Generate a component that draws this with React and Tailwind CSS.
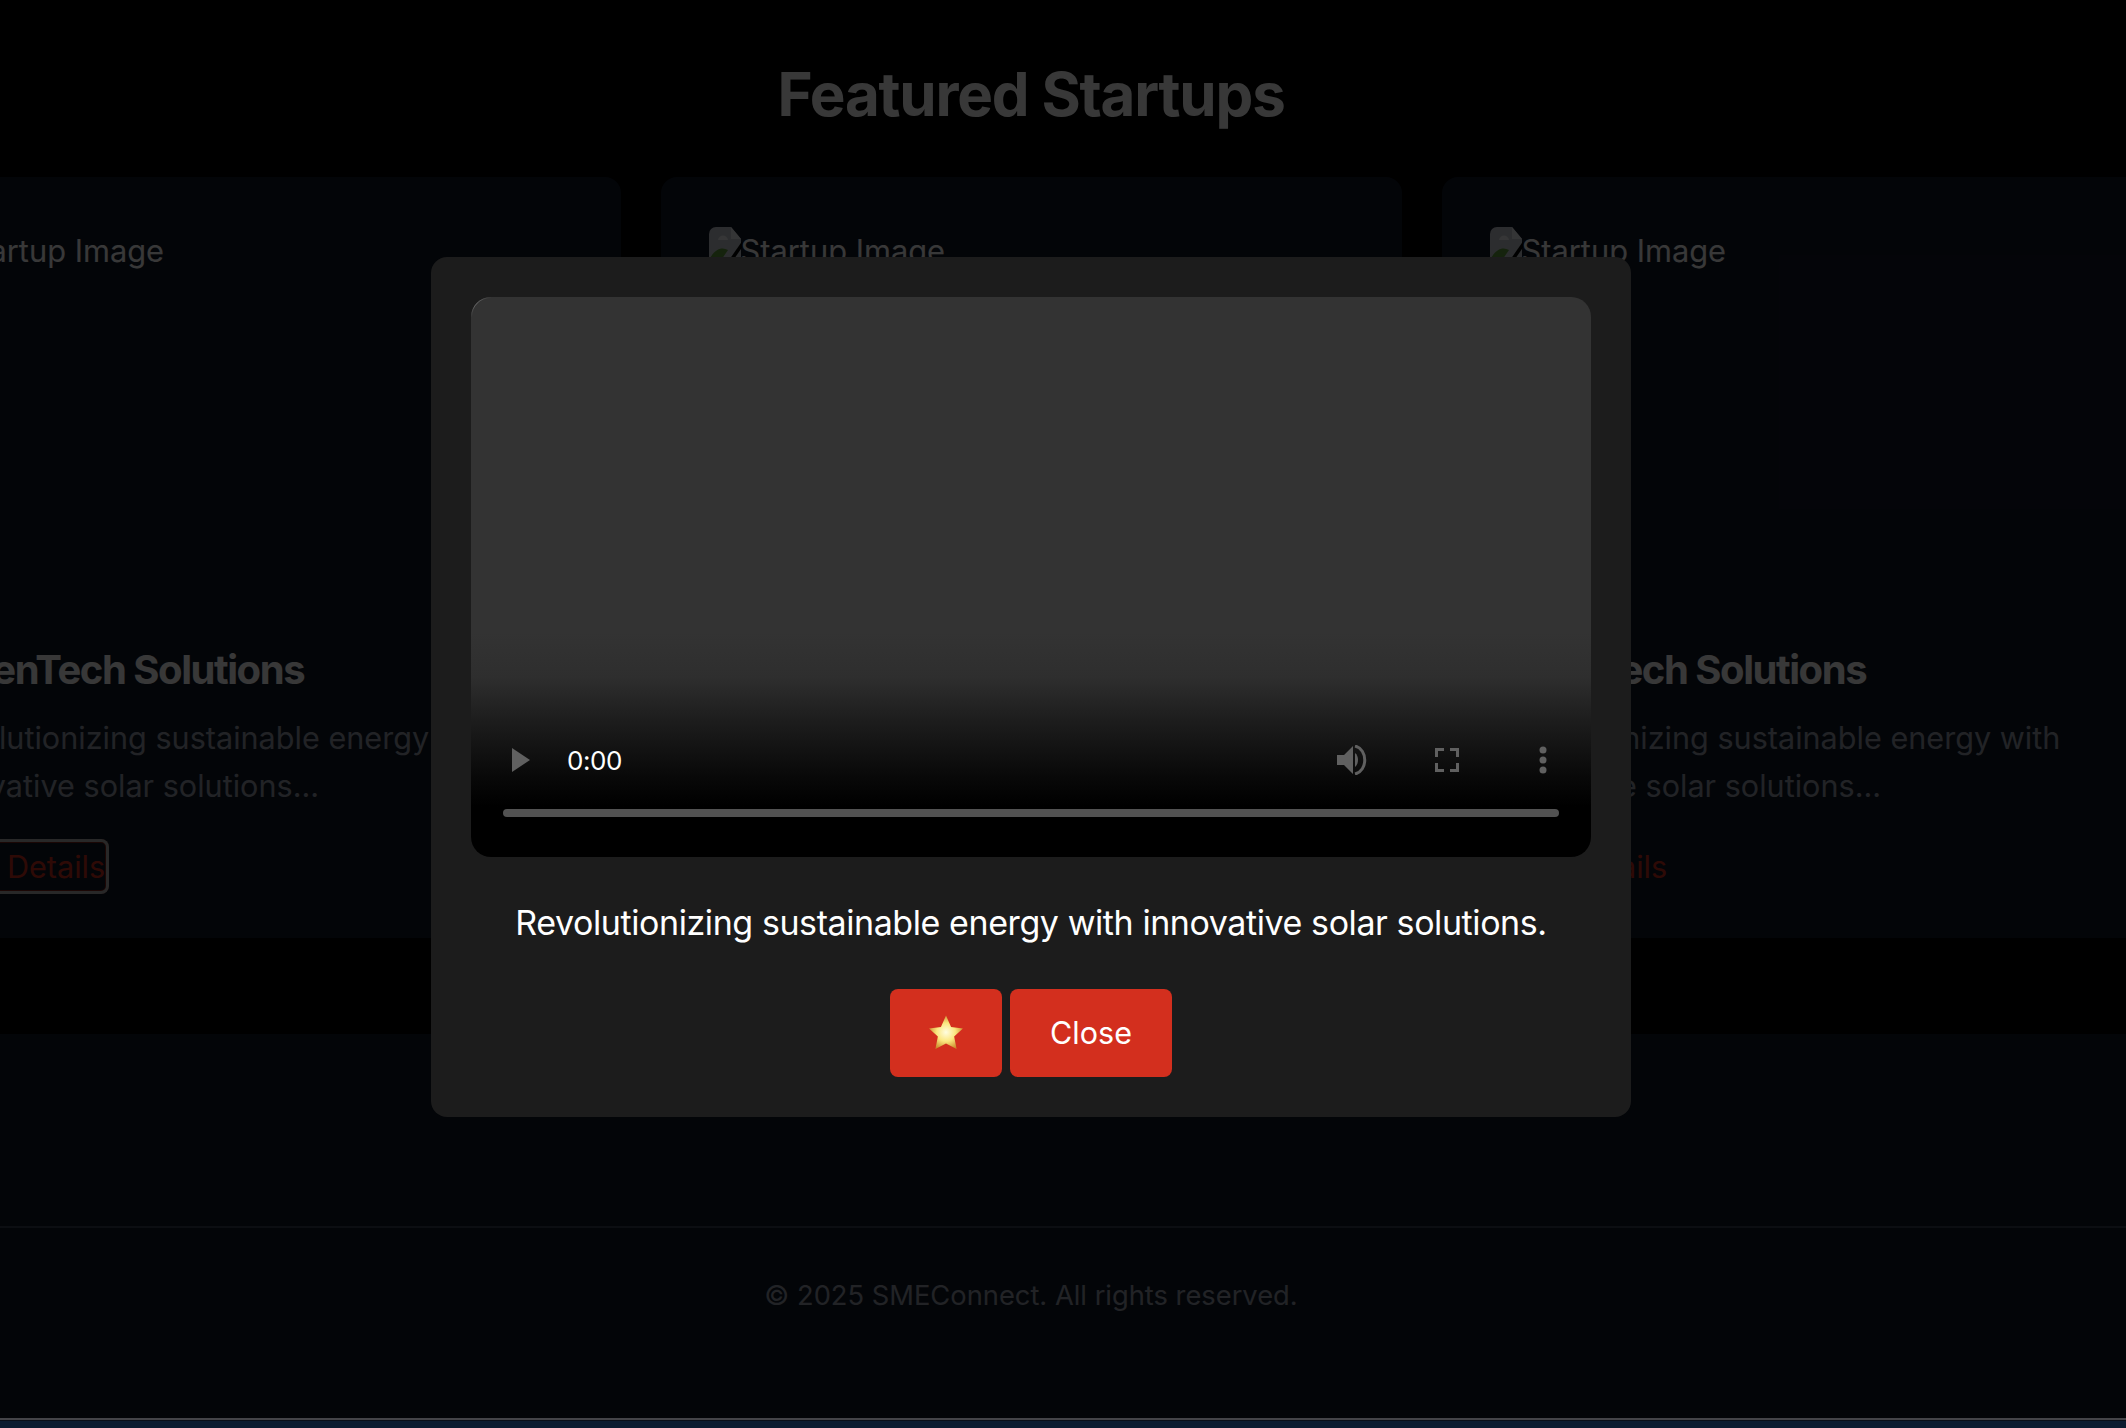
const BrokenImage = () => (
  <svg width="34" height="42" viewBox="0 0 34 42" className="shrink-0 mt-[2px] -mr-[2px]">
    <path d="M7 0h15l10 12v23a7 7 0 0 1-7 7H7a7 7 0 0 1-7-7V7a7 7 0 0 1 7-7z" fill="#c8cdd4" />
    <path d="M22 0l10 12H22z" fill="#eef0f3" />
    <path d="M9 13c1-6 9-6 10 0z" fill="#f4f6f8" />
    <path d="M0 33c5-10 12-14 19-10L6 42a7 7 0 0 1-6-7z" fill="#5f9e3c" />
    <path d="M16 42L34 16" stroke="#000" strokeWidth="3.500" />
  </svg>
);

const StartupCard = ({ focused }) => (
  <div className="w-[741px] h-[761px] shrink-0 rounded-2xl bg-gray-900 p-12">
    <div className="h-[397px] mb-6 flex items-start text-[30.8px] leading-[52px] text-white">
      <BrokenImage />
      <span>Startup Image</span>
    </div>
    <h3 className="text-[40px] leading-[48px] font-bold tracking-[-1.45px] text-white mb-5">GreenTech Solutions</h3>
    <p className="text-[30.6px] leading-[48px] text-gray-400">
      Revolutionizing sustainable energy with innovative solar solutions...
    </p>
    {focused ? (
      <button className="mt-[29px] -ml-1 px-1 h-[55px] rounded-lg text-[30.6px] text-[#d32f1e] ring-[3px] ring-inset ring-[#b8b8b8] shadow-[inset_0_0_0_4px_#7a2218]">View Details</button>
    ) : (
      <button className="mt-[29px] h-[55px] text-[30.6px] text-[#d32f1e]">View Details</button>
    )}
  </div>
);

const VideoPlayer = () => (
  <div className="relative w-[1120px] h-[560px] rounded-[20px] bg-[linear-gradient(to_bottom,#333333_60%,#2e2e2e_68%,#1c1c1c_76%,#080808_86%,#000000_91%)] flex flex-col justify-end px-8 pb-[40px]">
    <svg width="22" height="22" viewBox="0 0 22 22" fill="none" className="absolute left-0 top-0">
      <path d="M0.500 20C0.500 9 9 0.500 20 0.500" stroke="url(#arc)" strokeWidth="1" />
      <defs>
        <linearGradient id="arc" x1="0" y1="20" x2="20" y2="0" gradientUnits="userSpaceOnUse">
          <stop offset="0%" stopColor="#333333" />
          <stop offset="45%" stopColor="#6a6a6a" />
          <stop offset="100%" stopColor="#333333" />
        </linearGradient>
      </defs>
    </svg>
    <div className="flex items-center justify-between h-[40px] mb-[29px]">
      <div className="flex items-center gap-[37px] pl-[9px]">
        <svg width="18" height="24" viewBox="0 0 18 24"><path d="M0 0l18 12L0 24z" fill="#606060" /></svg>
        <span className="text-[26px] tracking-[-0.4px] text-white">0:00</span>
      </div>
      <div className="flex items-center pr-[12px]">
        <svg width="32" height="30" viewBox="0 0 32 30">
          <path d="M1 10h7l9-9v28l-9-9H1z" fill="#606060" />
          <path d="M19 8c4 3 4 11 0 14z" fill="#606060" />
          <path d="M19 1c13 3 13 25 0 28" fill="none" stroke="#606060" strokeWidth="3" />
        </svg>
        <svg width="24" height="24" viewBox="0 0 24 24" fill="none" stroke="#606060" strokeWidth="3" className="ml-[67px] mr-[80px]">
          <path d="M1.500 9V1.500H9M15 1.500h7.500V9M22.500 15v7.500H15M9 22.500H1.500V15" />
        </svg>
        <svg width="8" height="28" viewBox="0 0 8 28" fill="#606060">
          <circle cx="4" cy="4" r="3.500" />
          <circle cx="4" cy="14" r="3.500" />
          <circle cx="4" cy="24" r="3.500" />
        </svg>
      </div>
    </div>
    <div className="h-2 rounded-full bg-[#525252]" />
  </div>
);

const StarEmoji = () => (
  <svg width="36" height="35" viewBox="0 0 34 33" className="-mt-[2px]">
    <defs>
      <radialGradient id="star" cx="50%" cy="50%" r="55%">
        <stop offset="0%" stopColor="#fffde0" />
        <stop offset="50%" stopColor="#fbe77f" />
        <stop offset="100%" stopColor="#c98526" />
      </radialGradient>
    </defs>
    <path d="M17 0.500l4.800 10.900 11.200 1.300-8.300 7.600 2.300 11.700L17 26.900 7 32l2.300-11.700L1 12.700l11.200-1.300z" fill="url(#star)" />
  </svg>
);

export default function App() {
  return (
    <div className="relative w-[2126px] h-[1428px] overflow-hidden bg-black font-['Inter',sans-serif]">
      <div className="w-[2062px]">
        <h2 className="pt-[58px] mb-[47px] text-center text-[60px] leading-[72px] font-bold tracking-[-1.2px] text-white">Featured Startups</h2>
        <div className="flex justify-center gap-10 pb-[96px]">
          <StartupCard focused />
          <StartupCard />
          <StartupCard />
        </div>
      </div>

      <footer className="w-full h-[384px] bg-gray-900 pt-[192px]">
        <div className="border-t-2 border-gray-700 w-full h-[70px]" />
        <p className="w-[2062px] text-center text-[27.3px] leading-[36px] -mt-[18px] text-gray-400">© 2025 SMEConnect. All rights reserved.</p>
      </footer>

      <div className="h-[10px] flex flex-col bg-[#0c1c30]">
        <div className="h-[2px] bg-[#444448]" />
        <div className="h-px bg-[#0a0f18]" />
      </div>

      <div className="absolute left-0 right-0 top-0 h-[1418px] bg-black/[0.78]">
        <div className="w-[2062px] h-[1374px] flex items-center justify-center">
          <div className="w-[1200px] h-[860px] rounded-2xl bg-[#1c1c1c] p-10 flex flex-col items-center">
            <VideoPlayer />
            <p className="my-10 text-[34px] leading-[52px] tracking-[-0.42px] text-white text-center whitespace-nowrap">
              Revolutionizing sustainable energy with innovative solar solutions.
            </p>
            <div className="flex gap-2">
              <button className="w-[112px] h-[88px] rounded-lg bg-[#d32f1e] flex items-center justify-center"><StarEmoji /></button>
              <button className="w-[162px] h-[88px] rounded-lg bg-[#d32f1e] text-[30.5px] text-white">Close</button>
            </div>
          </div>
        </div>
      </div>
    </div>
  );
}
